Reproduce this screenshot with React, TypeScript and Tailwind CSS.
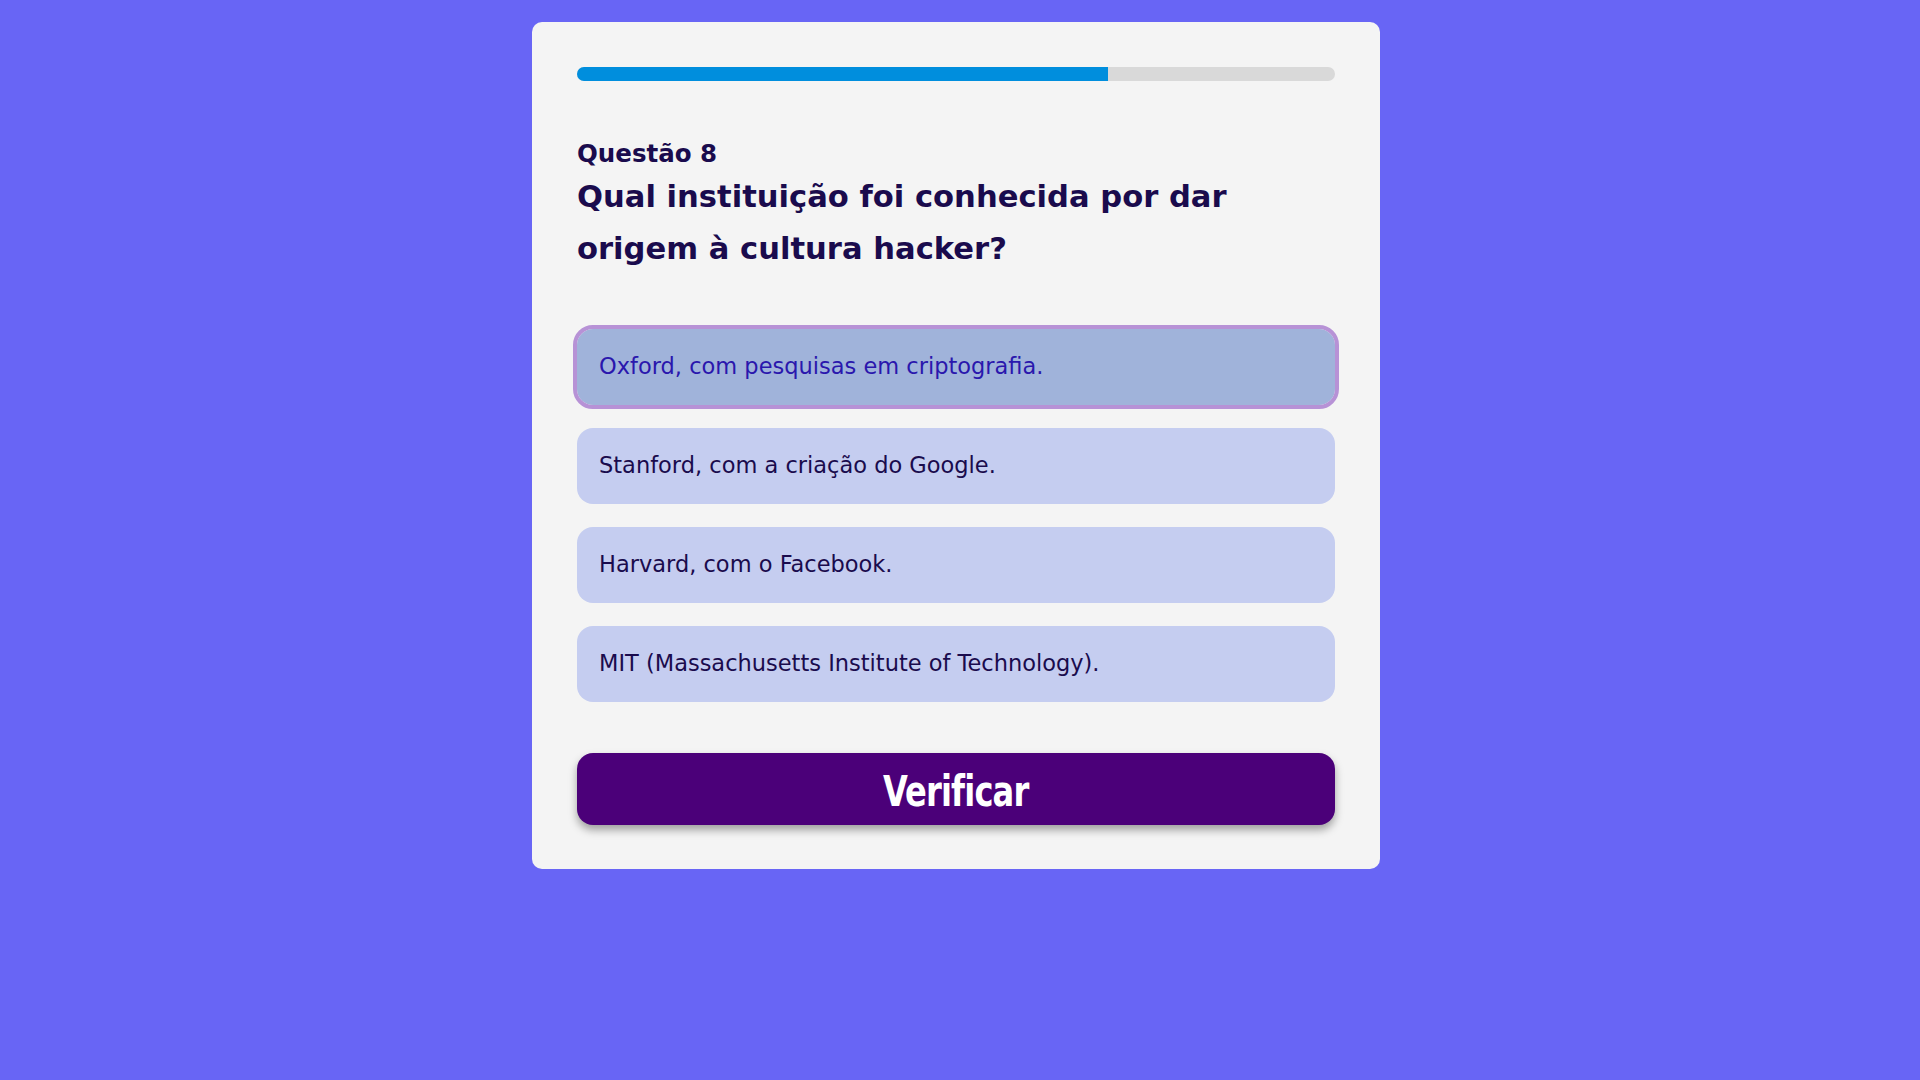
import React, { useState } from 'react';

// Quiz data
const options = [
  'Oxford, com pesquisas em criptografia.',
  'Stanford, com a criação do Google.',
  'Harvard, com o Facebook.',
  'MIT (Massachusetts Institute of Technology).',
];

const progress = 70;

export default function App() {
  const [selected, setSelected] = useState<number | null>(0);

  return (
    <div
      className="min-h-screen w-full bg-[#6865f5] flex justify-center pr-2 pt-[22px]"
      style={{ fontFamily: '"DejaVu Sans", "Open Sans", sans-serif' }}
    >
      <div className="w-[848px] h-fit bg-[#f4f4f4] rounded-[10px] p-[45px] pb-[44px] flex flex-col">
        {/* Progress */}
        <div className="w-full h-[14px] bg-[#d9d9d9] rounded-full overflow-hidden">
          <div className="h-full bg-[#008edd]" style={{ width: `${progress}%` }} />
        </div>

        {/* Question */}
        <h2 className="mt-[57px] text-[24.5px] leading-[32px] font-bold text-[#1a0b4d]">Questão 8</h2>
        <h1 className="mt-[1px] text-[30.6px] leading-[52px] font-bold text-[#1a0b4d] pr-[60px]">
          Qual instituição foi conhecida por dar origem à cultura hacker?
        </h1>

        {/* Options */}
        <div className="mt-[54px] flex flex-col gap-[23px]">
          {options.map((opt, i) => (
            <button
              key={opt}
              onClick={() => setSelected(i)}
              className={`h-[76px] w-full rounded-[16px] px-[22px] flex items-center text-left text-[22.5px] ${
                selected === i
                  ? 'bg-[#a0b3da] text-[#2a17ad] outline-[4px] outline-solid outline-[#b792d6]'
                  : 'bg-[#c5cdf0] text-[#1a0b4d]'
              }`}
            >
              {opt}
            </button>
          ))}
        </div>

        {/* Verify */}
        <button className="mt-[51px] h-[72px] w-full rounded-[16px] bg-[#4b0079] text-white shadow-[0_5px_8px_rgba(0,0,0,0.35)] flex items-center justify-center pt-1">
          <span
            className="inline-block text-[43px] font-bold scale-x-[0.83] tracking-[-1px]"
            style={{ fontFamily: '"DejaVu Sans Condensed", "Liberation Sans", sans-serif' }}
          >
            Verificar
          </span>
        </button>
      </div>
    </div>
  );
}
